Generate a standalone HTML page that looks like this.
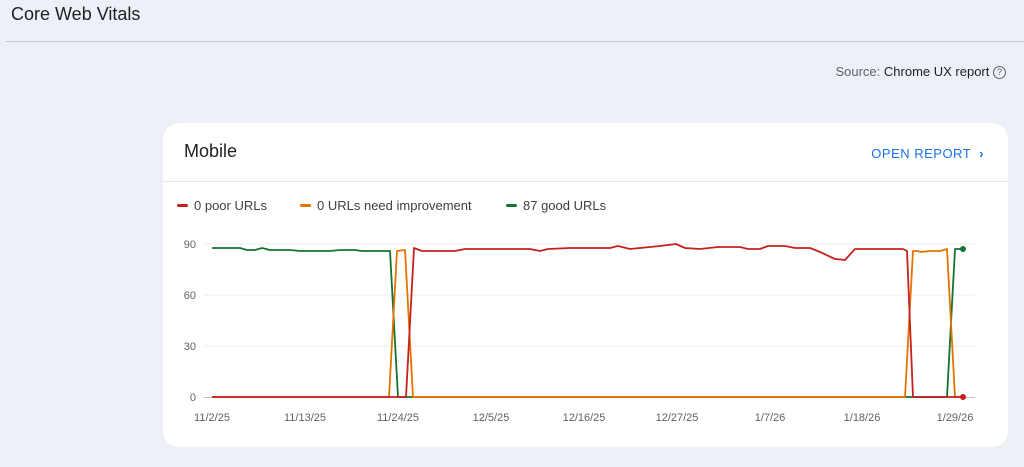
<!DOCTYPE html>
<html><head><meta charset="utf-8"><style>
body{margin:0;width:1024px;height:467px;background:#edf0f7;font-family:"Liberation Sans",sans-serif;overflow:hidden;position:relative}
.t{position:absolute;left:11px;top:4px;font-size:18px;color:#202124}
.hr{position:absolute;left:6px;right:0;top:41px;height:1px;background:#c4c7cc}
.src{position:absolute;right:18px;top:64px;font-size:13px;color:#5f6368}
.src b{font-weight:normal;color:#202124}
.card{position:absolute;left:163px;top:123px;width:845px;height:324px;background:#fff;border-radius:16px}
.mob{position:absolute;left:21px;top:18px;font-size:18px;color:#202124}
.open{position:absolute;right:24px;top:23px;font-size:13px;color:#1a73e8;letter-spacing:.5px}
.div{position:absolute;left:0;right:0;top:58px;height:1px;background:#e3e5e8}
.lg{position:absolute;top:75px;font-size:13px;color:#3c4043}
.lg i{display:inline-block;width:11px;height:3px;border-radius:2px;vertical-align:middle;margin-right:6px;position:relative;top:-1px}
</style></head><body>
<div class="t">Core Web Vitals</div>
<div class="hr"></div>
<div class="src">Source: <b>Chrome UX report</b> <span style="display:inline-block;width:11px;height:11px;border:1.3px solid #5f6368;border-radius:50%;font-size:9px;text-align:center;line-height:11px;vertical-align:middle">?</span></div>
<div class="card">
<div class="mob">Mobile</div>
<div class="open">OPEN REPORT &nbsp;<span style="font-weight:bold">›</span></div>
<div class="div"></div>
<div class="lg" style="left:14px"><i style="background:#c5221f"></i>0 poor URLs</div>
<div class="lg" style="left:137px"><i style="background:#e37400"></i>0 URLs need improvement</div>
<div class="lg" style="left:343px"><i style="background:#137333"></i>87 good URLs</div>
</div>
<svg width="1024" height="467" style="position:absolute;left:0;top:0" font-family="Liberation Sans,sans-serif">
<g stroke="#eceef1" stroke-width="1"><line x1="204" y1="244" x2="975" y2="244"/><line x1="204" y1="295" x2="975" y2="295"/><line x1="204" y1="346" x2="975" y2="346"/></g>
<line x1="204" y1="397.5" x2="975" y2="397.5" stroke="#bdc1c6"/>
<g font-size="11" fill="#5f6368" text-anchor="end"><text x="196" y="248">90</text><text x="196" y="299">60</text><text x="196" y="350">30</text><text x="196" y="401">0</text></g>
<g font-size="11" fill="#5f6368" text-anchor="middle"><text x="212" y="421">11/2/25</text><text x="305" y="421">11/13/25</text><text x="398" y="421">11/24/25</text><text x="491" y="421">12/5/25</text><text x="584" y="421">12/16/25</text><text x="677" y="421">12/27/25</text><text x="770" y="421">1/7/26</text><text x="862" y="421">1/18/26</text><text x="955" y="421">1/29/26</text></g>
<g fill="none" stroke-width="1.8" stroke-linejoin="round">
<polyline stroke="#137333" points="212,248 240,248 247,250 255,250 262,248 270,250 290,250 300,251 330,251 340,250 355,250 362,251 390,251 398,397 905,397 913,397 947,397 955,249 963,249"/>
<polyline stroke="#e37400" points="212,397 389,397 397,251 405,250 413,397 905,397 913,251 917,251 921,252 930,251 940,251 947,249 955,397 963,397"/>
<polyline stroke="#c5221f" points="212,397 406,397 414,248 422,251 455,251 465,249 530,249 540,251 548,249 570,248 610,248 618,246 630,249 640,248 660,246 668,245 676,244 685,248 700,249 718,247 740,247 748,249 760,249 768,246 785,246 795,248 810,248 820,252 835,259 845,260 855,249 903,249 907,251 913,397 963,397"/>
<line x1="413" y1="397" x2="905" y2="397" stroke="#e37400"/>
</g>
<circle cx="963" cy="249" r="3" fill="#137333"/><circle cx="963" cy="397" r="3" fill="#c5221f"/>
</svg>
</body></html>
